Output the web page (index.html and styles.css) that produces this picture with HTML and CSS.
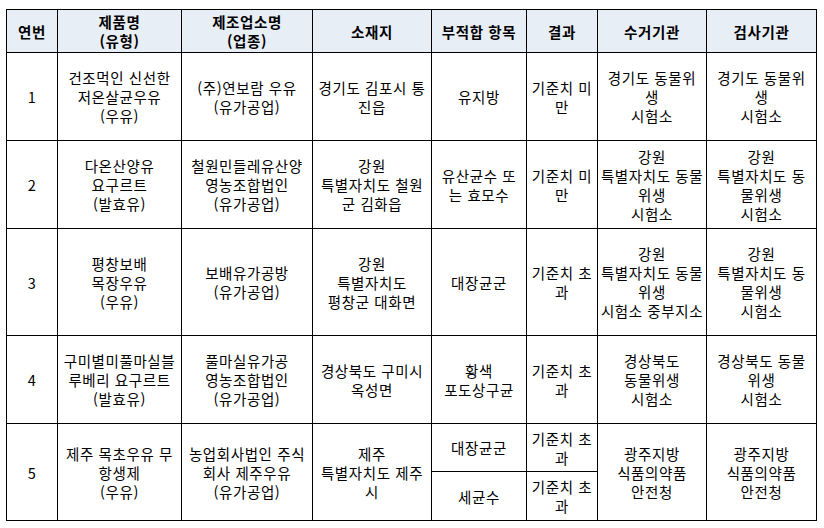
FILE: index.html
```html
<!DOCTYPE html>
<html lang="ko">
<head>
<meta charset="utf-8">
<title>부적합 목록</title>
<link rel="stylesheet" href="styles.css">
</head>
<body>
<table class="grid">
  <colgroup>
    <col class="c1"><col class="c2"><col class="c3"><col class="c4">
    <col class="c5"><col class="c6"><col class="c7"><col class="c8">
  </colgroup>
  <thead>
    <tr class="h-head">
      <th>연번</th>
      <th>제품명<br>(유형)</th>
      <th>제조업소명<br>(업종)</th>
      <th>소재지</th>
      <th>부적합 항목</th>
      <th>결과</th>
      <th>수거기관</th>
      <th>검사기관</th>
    </tr>
  </thead>
  <tbody>
    <tr class="h-88">
      <td>1</td>
      <td>건조먹인 신선한<br>저온살균우유<br>(우유)</td>
      <td>(주)연보람 우유<br>(유가공업)</td>
      <td>경기도 김포시 통<br>진읍</td>
      <td>유지방</td>
      <td>기준치 미<br>만</td>
      <td>경기도 동물위<br>생<br>시험소</td>
      <td>경기도 동물위<br>생<br>시험소</td>
    </tr>
    <tr class="h-88">
      <td>2</td>
      <td>다온산양유<br>요구르트<br>(발효유)</td>
      <td>철원민들레유산양<br>영농조합법인<br>(유가공업)</td>
      <td>강원<br>특별자치도 철원<br>군 김화읍</td>
      <td>유산균수 또<br>는 효모수</td>
      <td>기준치 미<br>만</td>
      <td>강원<br>특별자치도 동물<br>위생<br>시험소</td>
      <td>강원<br>특별자치도 동<br>물위생<br>시험소</td>
    </tr>
    <tr class="h-107">
      <td>3</td>
      <td>평창보배<br>목장우유<br>(우유)</td>
      <td>보배유가공방<br>(유가공업)</td>
      <td>강원<br>특별자치도<br>평창군 대화면</td>
      <td>대장균군</td>
      <td>기준치 초<br>과</td>
      <td>강원<br>특별자치도 동물<br>위생<br>시험소 중부지소</td>
      <td>강원<br>특별자치도 동<br>물위생<br>시험소</td>
    </tr>
    <tr class="h-88">
      <td>4</td>
      <td>구미별미풀마실블<br>루베리 요구르트<br>(발효유)</td>
      <td>풀마실유가공<br>영농조합법인<br>(유가공업)</td>
      <td>경상북도 구미시<br>옥성면</td>
      <td>황색<br>포도상구균</td>
      <td>기준치 초<br>과</td>
      <td>경상북도<br>동물위생<br>시험소</td>
      <td>경상북도 동물<br>위생<br>시험소</td>
    </tr>
    <tr class="h-48">
      <td rowspan="2">5</td>
      <td rowspan="2">제주 목초우유 무<br>항생제<br>(우유)</td>
      <td rowspan="2">농업회사법인 주식<br>회사 제주우유<br>(유가공업)</td>
      <td rowspan="2">제주<br>특별자치도 제주<br>시</td>
      <td>대장균군</td>
      <td>기준치 초<br>과</td>
      <td rowspan="2">광주지방<br>식품의약품<br>안전청</td>
      <td rowspan="2">광주지방<br>식품의약품<br>안전청</td>
    </tr>
    <tr class="h-49">
      <td>세균수</td>
      <td>기준치 초<br>과</td>
    </tr>
  </tbody>
</table>
</body>
</html>
```

FILE: styles.css
```css
html, body {
  margin: 0;
  padding: 0;
  background: #ffffff;
}
body {
  padding: 9px 0 0 6px;
  font-family: "Noto Sans CJK KR", "Noto Sans", sans-serif;
  font-size: 14.5px;
  line-height: 19px;
  letter-spacing: 0.6px;
  color: #000000;
}
.grid {
  border-collapse: collapse;
  table-layout: fixed;
  width: 811px;
}
.c1 { width: 51px; }
.c2 { width: 124px; }
.c3 { width: 131px; }
.c4 { width: 119px; }
.c5 { width: 95px; }
.c6 { width: 71px; }
.c7 { width: 109px; }
.c8 { width: 110px; }
.grid th,
.grid td {
  border: 1px solid #000000;
  padding: 0;
  text-align: center;
  vertical-align: middle;
  white-space: nowrap;
  overflow: hidden;
}
.grid th {
  background: #e8eef6;
  font-weight: 700;
}
.h-head { height: 43px; }
.h-88 { height: 88px; }
.h-107 { height: 107px; }
.h-48 { height: 48px; }
.h-49 { height: 49px; }
```
